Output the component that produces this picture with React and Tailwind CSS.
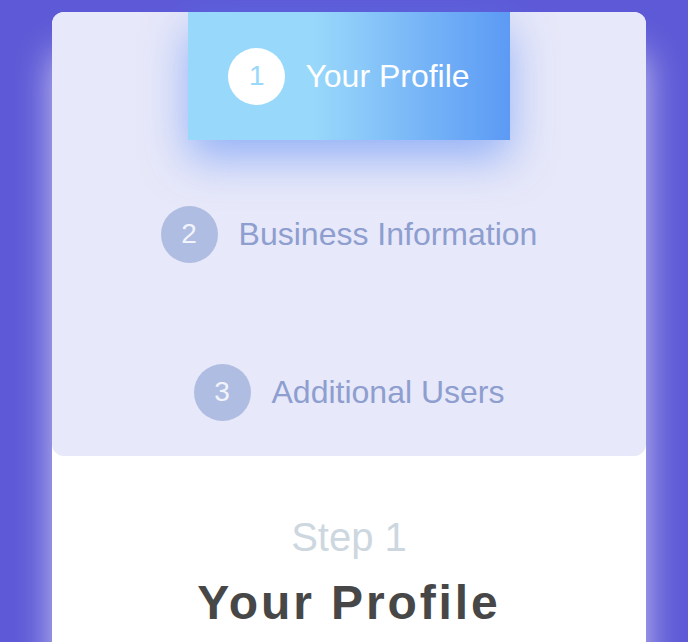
import React from "react";

const steps = [
  { n: 1, label: "Your Profile", active: true },
  { n: 2, label: "Business Information" },
  { n: 3, label: "Additional Users" },
];

export default function App() {
  return (
    <div
      className="h-[642px] w-full overflow-hidden bg-[#5e5ad7] pt-[12px]"
      style={{ fontFamily: '"Liberation Sans", Arial, sans-serif' }}
    >
      <div className="ml-[52px] h-[700px] w-[594px] rounded-t-[12px] bg-white shadow-[0_40px_36px_rgba(255,255,255,0.65)]">
        <div className="flex flex-col items-center gap-[30px] rounded-[12px] bg-[#e7e8f9]">
          {steps.map((s) =>
            s.active ? (
              <div
                key={s.n}
                className="flex h-[128px] items-center gap-[20px] bg-[linear-gradient(to_right,#98d9fb_0%,#98d9fb_38%,#8ccbf9_52%,#77b5f7_72%,#5c9af5_100%)] px-[40px] shadow-[0_18px_44px_rgba(92,140,245,0.6)]"
              >
                <div className="flex h-[57px] w-[57px] items-center justify-center rounded-full bg-white text-[28px] text-[#98d8fb]">
                  {s.n}
                </div>
                <span className="text-[32px] leading-none text-white">{s.label}</span>
              </div>
            ) : (
              <div key={s.n} className="flex h-[128px] items-center gap-[21px]">
                <div className="flex h-[57px] w-[57px] items-center justify-center rounded-full bg-[#b0bde2] text-[28px] text-[#f2f4fc]">
                  {s.n}
                </div>
                <span className="text-[32px] leading-none text-[#8d9ecf]">{s.label}</span>
              </div>
            )
          )}
        </div>
        <div className="flex flex-col items-center pt-[58px]">
          <div className="text-[40px] leading-[46px] text-[#cdd7df]">Step 1</div>
          <div className="mt-[15px] text-[48px] font-bold leading-[56px] tracking-[2.9px] text-[#474747]">
            Your Profile
          </div>
        </div>
      </div>
    </div>
  );
}
